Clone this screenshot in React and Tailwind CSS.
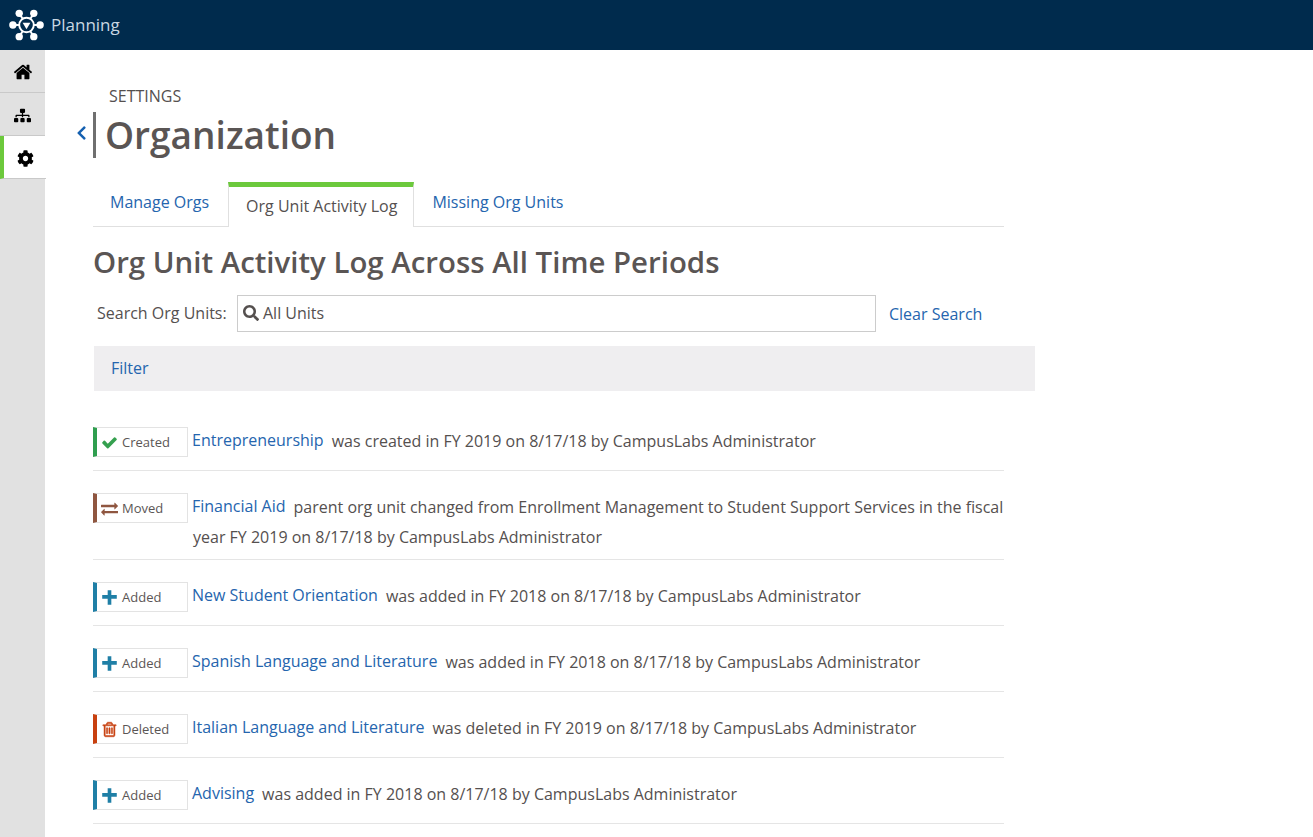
import { FaSitemap, FaCog, FaSearch, FaChevronLeft } from 'react-icons/fa';

// Font Awesome 4 glyphs, the package only ships the newer drawings
const HOME = 'M1472 992v480q0 26-19 45t-45 19h-384v-384h-256v384h-384q-26 0-45-19t-19-45v-480q0-1 .5-3t.5-3l575-474 575 474q1 2 1 6zm223-69l-62 74q-8 9-21 11h-3q-13 0-21-7l-692-577-692 577q-12 8-24 7-13-2-21-11l-62-74q-8-10-7-23.5t11-21.5l719-599q32-26 76-26t76 26l244 204v-195q0-14 9-23t23-9h192q14 0 23 9t9 23v408l219 182q10 8 11 21.5t-7 23.5z';
const CHECK = 'M1671 566q0 40-28 68l-724 724-136 136q-28 28-68 28t-68-28l-136-136-362-362q-28-28-28-68t28-68l136-136q28-28 68-28t68 28l294 295 656-657q28-28 68-28t68 28l136 136q28 28 28 68z';
const EXCHANGE = 'M1792 1184v192q0 13-9.5 22.5t-22.5 9.5h-1376v192q0 13-9.5 22.5t-22.5 9.5q-12 0-24-10l-319-320q-9-9-9-22 0-14 9-23l320-320q9-9 23-9 13 0 22.5 9.5t9.5 22.5v192h1376q13 0 22.5 9.5t9.5 22.5zm0-544q0 14-9 23l-320 320q-9 9-23 9-13 0-22.5-9.5t-9.5-22.5v-192h-1376q-13 0-22.5-9.5t-9.5-22.5v-192q0-13 9.5-22.5t22.5-9.5h1376v-192q0-14 9-23t23-9q12 0 24 10l319 319q9 9 9 23z';
const PLUS = 'M704 128h384v512h576v384h-576v640h-384v-640h-576v-384h576z';
const TRASH = 'M704 736v576q0 14-9 23t-23 9h-64q-14 0-23-9t-9-23v-576q0-14 9-23t23-9h64q14 0 23 9t9 23zm256 0v576q0 14-9 23t-23 9h-64q-14 0-23-9t-9-23v-576q0-14 9-23t23-9h64q14 0 23 9t9 23zm256 0v576q0 14-9 23t-23 9h-64q-14 0-23-9t-9-23v-576q0-14 9-23t23-9h64q14 0 23 9t9 23zm128 724v-948h-896v948q0 22 7 40.5t14.5 27 10.5 8.5h832q3 0 10.5-8.5t14.5-27 7-40.5zm-672-1076h448l-48-117q-7-9-17-11h-317q-10 2-17 11zm928 32v64q0 14-9 23t-23 9h-96v948q0 83-47 143.5t-113 60.5h-832q-66 0-113-58.5t-47-141.5v-952h-96q-14 0-23-9t-9-23v-64q0-14 9-23t23-9h309l70-167q15-37 54-63t79-26h320q40 0 79 26t54 63l70 167h309q14 0 23 9t9 23z';

function Glyph({ d, className, stroke }) {
  return (
    <svg viewBox="0 0 1792 1792" fill="currentColor" className={className}>
      <path d={d} stroke={stroke ? 'currentColor' : 'none'} strokeWidth={stroke || 0} />
    </svg>
  );
}

const badges = {
  created: { label: 'Created', bar: 'border-l-[#2f9e4f]', icon: <Glyph d={CHECK} className="w-[17px] h-[17px] text-[#35a04f]" /> },
  moved: { label: 'Moved', bar: 'border-l-[#8f5640]', icon: <Glyph d={EXCHANGE} className="w-[17px] h-[17px] text-[#8f5640]" /> },
  added: { label: 'Added', bar: 'border-l-[#1f7fa6]', icon: <Glyph d={PLUS} className="w-[17px] h-[17px] text-[#1f7fa6]" /> },
  deleted: { label: 'Deleted', bar: 'border-l-[#c8400f]', icon: <Glyph d={TRASH} stroke={50} className="w-[17px] h-[17px] text-[#c8400f]" /> },
};

const rows = [
  { type: 'created', name: 'Entrepreneurship', text: 'was created in FY 2019 on 8/17/18 by CampusLabs Administrator' },
  { type: 'moved', name: 'Financial Aid', text: 'parent org unit changed from Enrollment Management to Student Support Services in the fiscal year FY 2019 on 8/17/18 by CampusLabs Administrator' },
  { type: 'added', name: 'New Student Orientation', text: 'was added in FY 2018 on 8/17/18 by CampusLabs Administrator' },
  { type: 'added', name: 'Spanish Language and Literature', text: 'was added in FY 2018 on 8/17/18 by CampusLabs Administrator' },
  { type: 'deleted', name: 'Italian Language and Literature', text: 'was deleted in FY 2019 on 8/17/18 by CampusLabs Administrator' },
  { type: 'added', name: 'Advising', text: 'was added in FY 2018 on 8/17/18 by CampusLabs Administrator' },
];

function Logo() {
  const nodes = [[4, 17], [32, 17], [10.5, 5], [25.5, 5], [10.5, 29], [25.5, 29]];
  return (
    <svg width="35" height="34" viewBox="0 0 36 34" fill="#fff" className="shrink-0 ml-[1px]">
      {nodes.map(([x, y]) => (
        <g key={`${x}-${y}`}>
          <line x1="18" y1="17" x2={x} y2={y} stroke="#fff" strokeWidth="2" />
          <circle cx={x} cy={y} r="3.8" />
        </g>
      ))}
      <circle cx="18" cy="17" r="7.5" fill="#002b4d" stroke="#fff" strokeWidth="2" />
      <path d="M14 14.6h8L18 21.4z" fill="#fff" />
    </svg>
  );
}

function Badge({ type }) {
  const b = badges[type];
  return (
    <div className={`w-[95px] h-[30px] shrink-0 flex items-center gap-[4px] pl-[4px] border border-[#e3e3e3] border-l-4 ${b.bar}`}>
      {b.icon}
      <span className="text-[13px] text-[#5b5655] leading-none">{b.label}</span>
    </div>
  );
}

function LogRow({ row }) {
  return (
    <div className="flex pt-[21px] pb-[7px] min-h-[66px] border-b border-[#e5e5e5]">
      <div className="mt-[1px] mr-[4px]">
        <Badge type={row.type} />
      </div>
      <p className="text-[16px] leading-[30px] text-[#55504f] pl-[1px] indent-[-1px]">
        <a className="inline-block -translate-y-px text-[#2565ae] mr-[8px] indent-0">{row.name}</a>
        {row.text}
      </p>
    </div>
  );
}

export default function App() {
  return (
    <div className="min-h-[837px] h-[837px] overflow-hidden flex flex-col bg-white font-['Open_Sans',sans-serif]">
      <header className="h-[50px] shrink-0 bg-[#002b4d] flex items-center pl-[8px] gap-[7px]">
        <Logo />
        <span className="text-[17px] text-[#c9d7e2]">Planning</span>
      </header>

      <div className="flex flex-1">
        <nav className="w-[45px] shrink-0 bg-[#e1e1e1] flex flex-col">
          <div className="h-[43px] pt-[2px] flex items-center justify-center border-b border-[#c9c9c9]">
            <Glyph d={HOME} className="w-[20px] h-[20px] text-black" />
          </div>
          <div className="h-[43px] pt-[2px] flex items-center justify-center border-b border-[#c9c9c9]">
            <FaSitemap className="w-[17px] h-[17px] text-black" />
          </div>
          <div className="h-[43px] w-[46px] pt-[2px] bg-white border-l-4 border-l-[#6cc93c] border-b border-b-[#c9c9c9] flex items-center justify-center">
            <FaCog className="w-[17px] h-[17px] text-black" />
          </div>
        </nav>

        <main className="flex-1 pl-[48px]">
          <div className="flex items-end pt-[37px] h-[108px]">
            <div className="w-[14px] h-[46px] pb-[4px] flex items-center -ml-[18px] mr-[4px]">
              <FaChevronLeft className="w-[11px] h-[16px] ml-[1px] text-[#1560b0]" />
            </div>
            <div className="border-l-[3px] border-[#6f6f6f] h-[46px] relative pl-[9px]">
              <div className="absolute left-[13px] -top-[26px] text-[16px] leading-[20px] text-[#55504f] whitespace-nowrap">SETTINGS</div>
              <h1 className="text-[37px] leading-[46px] font-semibold text-[#5a5554] whitespace-nowrap">Organization</h1>
            </div>
          </div>

          <div className="w-[911px] mt-[24px] h-[45px] flex border-b border-[#e0e0e0]">
            <a className="pl-[17px] pr-[18px] pt-[9px] text-[16px] leading-[22px] text-[#2565ae]">Manage Orgs</a>
            <div className="h-[45px] ml-[1px] border-t-[5px] border-t-[#6cc93c] border-x border-x-[#e0e0e0] bg-white pl-[17px] pr-[16px] pt-[8px] text-[16px] leading-[22px] text-[#55504f]">Org Unit Activity Log</div>
            <a className="px-[18px] pt-[9px] text-[16px] leading-[22px] text-[#2565ae]">Missing Org Units</a>
          </div>

          <h2 className="w-[942px] mt-[14px] text-[29.4px] leading-[42px] font-semibold text-[#5a5554]">Org Unit Activity Log Across All Time Periods</h2>

          <div className="mt-[12px] flex items-center h-[37px] pl-[4px]">
            <label className="text-[16px] text-[#55504f] w-[140px] pb-[2px]">Search Org Units:</label>
            <div className="w-[639px] h-[37px] border border-[#cccccc] flex items-center pl-[5px] pb-[2px] gap-[4px]">
              <FaSearch className="w-[16px] h-[16px] text-[#55504f]" />
              <span className="text-[16px] text-[#55504f]">All Units</span>
            </div>
            <a className="ml-[13px] text-[16px] text-[#2565ae]">Clear Search</a>
          </div>

          <div className="w-[941px] ml-[1px] mt-[14px] h-[45px] pb-[2px] bg-[#efeef0] flex items-center pl-[17px] text-[16px] text-[#2565ae]">Filter</div>

          <div className="w-[911px] mt-[14px]">
            {rows.map((row) => (
              <LogRow key={row.name} row={row} />
            ))}
          </div>
        </main>
      </div>
    </div>
  );
}
